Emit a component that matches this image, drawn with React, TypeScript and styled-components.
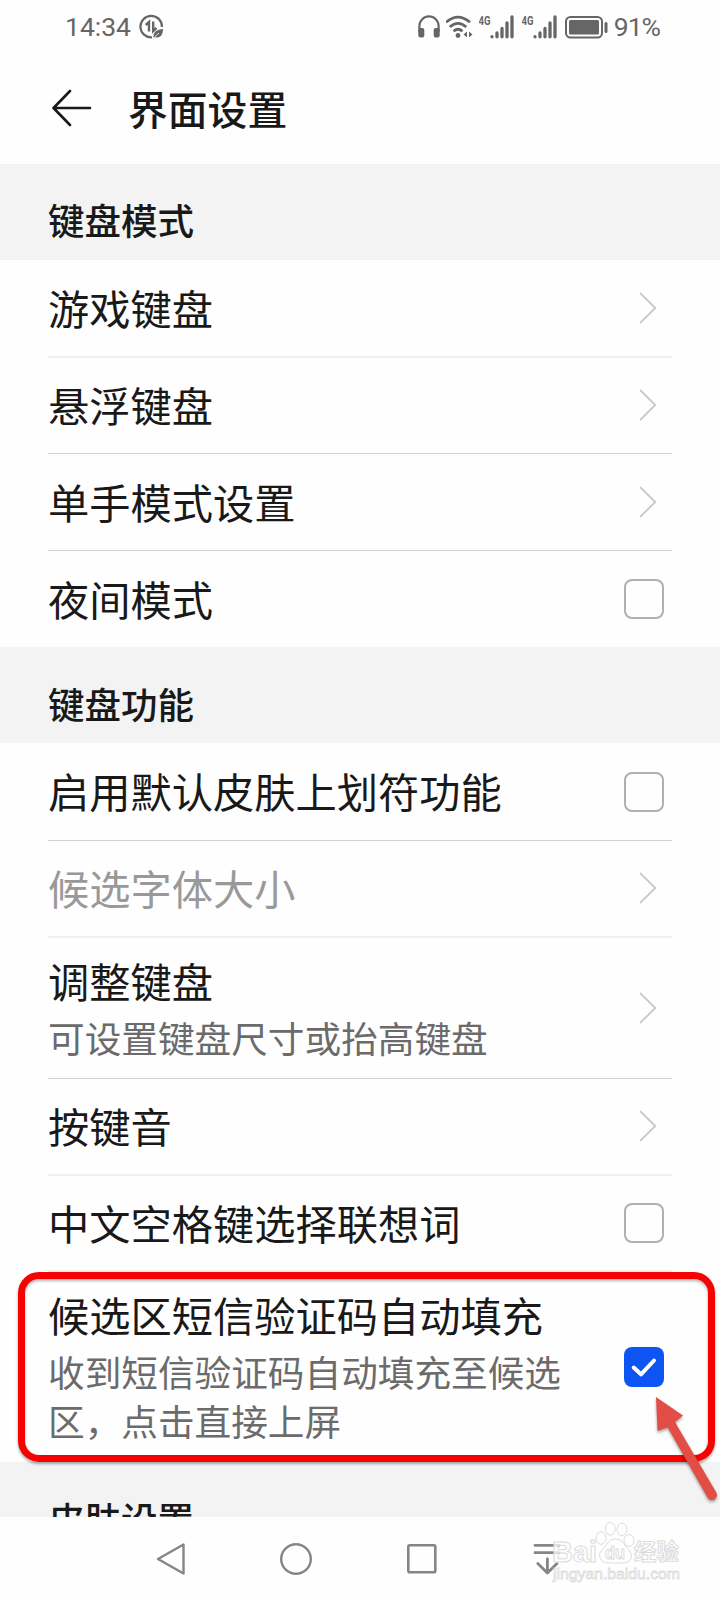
import React from "react";
import styled, { createGlobalStyle } from "styled-components";

const GlobalStyle = createGlobalStyle`
  * { box-sizing: border-box; }
  body {
    margin: 0;
    background: #fefefe;
    overflow: hidden;
    font-family: "Noto Sans CJK SC", sans-serif;
    color: #191919;
  }
`;

const Screen = styled.main`
  position: relative;
  width: 720px;
  height: 1600px;
  display: flex;
  flex-direction: column;
  overflow: hidden;
  background: #fefefe;
`;

const StatusBar = styled.header`
  flex: none;
  height: 52px;
  padding: 2px 60px 0 65px;
  display: flex;
  align-items: center;
  justify-content: space-between;
  color: #666;
  font-family: Roboto, sans-serif;
  font-size: 26.5px;
`;

const StatusGroup = styled.div<{ $gap: number }>`
  display: flex;
  align-items: center;
  gap: ${(p) => p.$gap}px;
`;

const StatusText = styled.span<{ $spacing?: number }>`
  line-height: 32px;
  letter-spacing: ${(p) => p.$spacing ?? 0}px;
`;

const TitleBar = styled.div`
  flex: none;
  height: 112px;
  padding-left: 52px;
  display: flex;
  align-items: center;
  gap: 36px;
`;

const PageTitle = styled.h1`
  margin: 0;
  font-size: 39.8px;
  font-weight: 500;
  line-height: 56px;
`;

const Content = styled.div`
  flex: none;
  height: 1353px;
  overflow: hidden;
`;

const SectionHeader = styled.h2<{ $top: number }>`
  margin: 0;
  height: 96px;
  padding: ${(p) => p.$top}px 48px 0;
  background: #f3f3f3;
  font-size: 36.5px;
  font-weight: 500;
  line-height: 50px;
`;

const Row = styled.div<{ $height: number; $line?: "thin" | "soft"; $inset: number }>`
  height: ${(p) => p.$height}px;
  margin: 0 48px;
  padding-right: ${(p) => p.$inset}px;
  display: flex;
  align-items: center;
  justify-content: space-between;
  border-bottom: ${(p) =>
    p.$line === "thin" ? "1px solid #d3d3d3" : p.$line === "soft" ? "2px solid #f0f0f0" : "none"};
`;

const RowText = styled.div`
  width: 530px;
  padding-bottom: 2px;
`;

const RowTitle = styled.div<{ $muted?: boolean }>`
  font-size: 41.25px;
  line-height: 55px;
  white-space: nowrap;
  color: ${(p) => (p.$muted ? "#999" : "#191919")};
`;

const RowNote = styled.div`
  margin-top: 5px;
  font-size: 36.65px;
  line-height: 49px;
  color: #6b6b6b;
`;

const Box = styled.span<{ $checked: boolean }>`
  flex: none;
  width: 40px;
  height: 40px;
  border-radius: 8px;
  border: ${(p) => (p.$checked ? "none" : "2px solid #b0b0b0")};
  background: ${(p) => (p.$checked ? "#0d55f2" : "transparent")};
`;

const More = styled.svg`
  flex: none;
  margin-bottom: 1px;
`;

const NavBar = styled.nav`
  flex: 1;
  padding: 0 159px 0 155px;
  display: flex;
  align-items: center;
  justify-content: space-between;
`;

const HighlightFrame = styled.div`
  position: absolute;
  left: 18px;
  top: 1272px;
  width: 697px;
  height: 190px;
  border: 7px solid #f50202;
  border-radius: 21px;
  box-shadow: 0 2px 3px rgba(0, 0, 0, 0.35), inset 0 2px 3px rgba(0, 0, 0, 0.3);
`;

const Pointer = styled.svg`
  position: absolute;
  left: 640px;
  top: 1385px;
  filter: drop-shadow(0 2px 1.5px rgba(0, 0, 0, 0.35));
`;

const Watermark = styled.svg`
  position: absolute;
  left: 545px;
  top: 1515px;
`;

const Chevron = () => (
  <More width="18" height="32" viewBox="0 0 18 32" fill="none" stroke="#c8c8c8" strokeWidth="1.8">
    <path d="M0 1L15.3 16L0 31" />
  </More>
);

const Check = ({ checked = false }: { checked?: boolean }) => (
  <Box $checked={checked}>
    {checked && (
      <svg width="40" height="40" viewBox="0 0 40 40" fill="none" stroke="#fff" strokeWidth="4" strokeLinecap="round" strokeLinejoin="round">
        <path d="M9.7 20.5L17 27.3L30 13.5" />
      </svg>
    )}
  </Box>
);

type Item = {
  title: string;
  note?: string;
  height: number;
  line?: "thin" | "soft";
  muted?: boolean;
  control: "more" | "off" | "on";
};

const modes: Item[] = [
  { title: "游戏键盘", height: 98, line: "soft", control: "more" },
  { title: "悬浮键盘", height: 96, line: "thin", control: "more" },
  { title: "单手模式设置", height: 97, line: "thin", control: "more" },
  { title: "夜间模式", height: 96, control: "off" },
];

const features: Item[] = [
  { title: "启用默认皮肤上划符功能", height: 98, line: "thin", control: "off" },
  { title: "候选字体大小", height: 97, line: "soft", muted: true, control: "more" },
  { title: "调整键盘", note: "可设置键盘尺寸或抬高键盘", height: 141, line: "thin", control: "more" },
  { title: "按键音", height: 97, line: "soft", control: "more" },
  { title: "中文空格键选择联想词", height: 96, line: "soft", control: "off" },
  { title: "候选区短信验证码自动填充", note: "收到短信验证码自动填充至候选区，点击直接上屏", height: 190, control: "on" },
];

const SettingRow = ({ item }: { item: Item }) => (
  <Row $height={item.height} $line={item.line} $inset={item.control === "more" ? 14 : 8}>
    <RowText>
      <RowTitle $muted={item.muted}>{item.title}</RowTitle>
      {item.note && <RowNote>{item.note}</RowNote>}
    </RowText>
    {item.control === "more" ? <Chevron /> : <Check checked={item.control === "on"} />}
  </Row>
);

const DataSaver = () => (
  <svg width="25" height="26" viewBox="0 0 25 26" fill="none" stroke="#666" strokeWidth="2.2">
    <path d="M13 23.4A10.8 10.8 0 1 1 23 13" />
    <path d="M6.8 11L10 8V17.5M14.2 7.5V17L17.5 14" strokeWidth="2.4" />
    <path d="M14.5 23.5C14 17.5 18 15.8 24 15C24 20.5 21.5 24.5 16.5 23.2Z" fill="#666" stroke="none" />
    <path d="M15.5 23L20 19" stroke="#fefefe" strokeWidth="0.8" />
  </svg>
);

const Headphones = () => (
  <svg width="22" height="24" viewBox="0 0 22 24" fill="none" stroke="#666" strokeWidth="2.2">
    <path d="M1.4 17V11A9.5 9.5 0 0 1 20.6 11V17" />
    <rect x="0.3" y="13" width="6" height="9.5" rx="2" fill="#666" stroke="none" />
    <rect x="15.7" y="13" width="6" height="9.5" rx="2" fill="#666" stroke="none" />
  </svg>
);

const Wifi = () => (
  <svg width="27" height="24" viewBox="0 0 27 24" fill="none" stroke="#666" strokeWidth="2.8">
    <path d="M0 7.3Q12 -3 24 7.3M3.8 12Q12 4.8 20.2 12M7.5 16.2Q12 12.2 16.5 16.2" />
    <circle cx="12" cy="20.5" r="2.4" fill="#666" stroke="none" />
    <path d="M21 16.5V22.5L17.5 19.5ZM23 16.5V22.5L26.5 19.5Z" fill="#666" stroke="none" />
  </svg>
);

const Signal = () => (
  <svg width="37" height="26" viewBox="0 0 37 26">
    <text x="0" y="11" fontFamily="Roboto, sans-serif" fontSize="13" fontWeight="700" fill="#666" textLength="12" lengthAdjust="spacingAndGlyphs" transform="translate(-0.5 0)">4G</text>
    <g stroke="#666" strokeWidth="3.3" strokeLinecap="round">
      <path d="M13 22.6V22.8M18 19V22.8M23 14.5V22.8M28 9V22.8M33 3V22.8" />
    </g>
  </svg>
);

const Battery = () => (
  <svg width="43" height="23" viewBox="0 0 43 23" fill="none">
    <rect x="1" y="1" width="36" height="20.5" rx="4.5" stroke="#666" strokeWidth="2" />
    <rect x="4" y="4" width="30" height="14.5" rx="1.5" fill="#666" />
    <path d="M41 7.5V15.5" stroke="#666" strokeWidth="3" strokeLinecap="round" />
  </svg>
);

export default function App() {
  return (
    <Screen>
      <GlobalStyle />
      <StatusBar>
        <StatusGroup $gap={8}>
          <StatusText>14:34</StatusText>
          <DataSaver />
        </StatusGroup>
        <StatusGroup $gap={6}>
          <Headphones />
          <Wifi />
          <Signal />
          <Signal />
          <Battery />
          <StatusText $spacing={-1}>91%</StatusText>
        </StatusGroup>
      </StatusBar>

      <TitleBar>
        <svg width="40" height="38" viewBox="0 0 40 38" fill="none" stroke="#191919" strokeWidth="2.6" strokeLinecap="round" strokeLinejoin="round">
          <path d="M38 19H1.5M18 2L1.5 19L18 36" />
        </svg>
        <PageTitle>界面设置</PageTitle>
      </TitleBar>

      <Content>
        <SectionHeader $top={31}>键盘模式</SectionHeader>
        {modes.map((item) => (
          <SettingRow key={item.title} item={item} />
        ))}
        <SectionHeader $top={32}>键盘功能</SectionHeader>
        {features.map((item) => (
          <SettingRow key={item.title} item={item} />
        ))}
        <SectionHeader $top={32}>皮肤设置</SectionHeader>
      </Content>

      <NavBar>
        <svg width="31" height="34" viewBox="0 0 31 34" fill="none" stroke="#858585" strokeWidth="2.4" strokeLinejoin="round">
          <path d="M3 17L28.5 2.5V31.5Z" />
        </svg>
        <svg width="34" height="34" viewBox="0 0 34 34" fill="none" stroke="#858585" strokeWidth="2.4">
          <circle cx="16" cy="17" r="14.8" />
        </svg>
        <svg width="32" height="30" viewBox="0 0 32 30" fill="none" stroke="#858585" strokeWidth="2.6">
          <rect x="1.3" y="1.3" width="27" height="27" rx="1.5" />
        </svg>
        <svg width="28" height="32" viewBox="0 0 28 32" fill="none" stroke="#858585" strokeWidth="2.8" strokeLinecap="round" strokeLinejoin="round">
          <path d="M2 2.3H26M2 9.7H26M14.4 16V30M4.8 20.5L14.4 30L24 20.5" />
        </svg>
      </NavBar>

      <HighlightFrame />
      <Pointer width="80" height="120" viewBox="0 0 80 120">
        <path d="M16 12L43 30.5L35 37L76.3 107.5A5 5 0 0 1 67.5 112.5L27.7 42.5L17.5 46Z" fill="#e24e45" />
      </Pointer>
      <Watermark width="140" height="72" viewBox="0 0 140 72" fill="#fefefe" fillOpacity="0.75" stroke="#dcdcdc" strokeWidth="1">
        <text x="7" y="47" fontFamily="Liberation Sans, sans-serif" fontWeight="700" fontSize="29" textLength="45" lengthAdjust="spacingAndGlyphs">Bai</text>
        <ellipse cx="56" cy="23" rx="5" ry="6.3" />
        <ellipse cx="65.3" cy="13.8" rx="5" ry="6.3" />
        <ellipse cx="77" cy="14.5" rx="5" ry="6.3" />
        <ellipse cx="84" cy="25.5" rx="5" ry="6" />
        <path d="M70 24C63 24 62 31 57 35C52 39 55 48 63 48H79C88 47 88 39 83 34C79 30 78 24 70 24Z" />
        <text x="60" y="44" fontFamily="Liberation Sans, sans-serif" fontWeight="700" fontSize="18" textLength="20" lengthAdjust="spacingAndGlyphs">du</text>
        <text x="89" y="45" fontFamily="Noto Sans CJK SC, sans-serif" fontWeight="700" fontSize="22.5">经验</text>
        <text x="8" y="64" fontFamily="Liberation Sans, sans-serif" fontSize="15" strokeWidth="0.8" textLength="127" lengthAdjust="spacingAndGlyphs">jingyan.baidu.com</text>
      </Watermark>
    </Screen>
  );
}
